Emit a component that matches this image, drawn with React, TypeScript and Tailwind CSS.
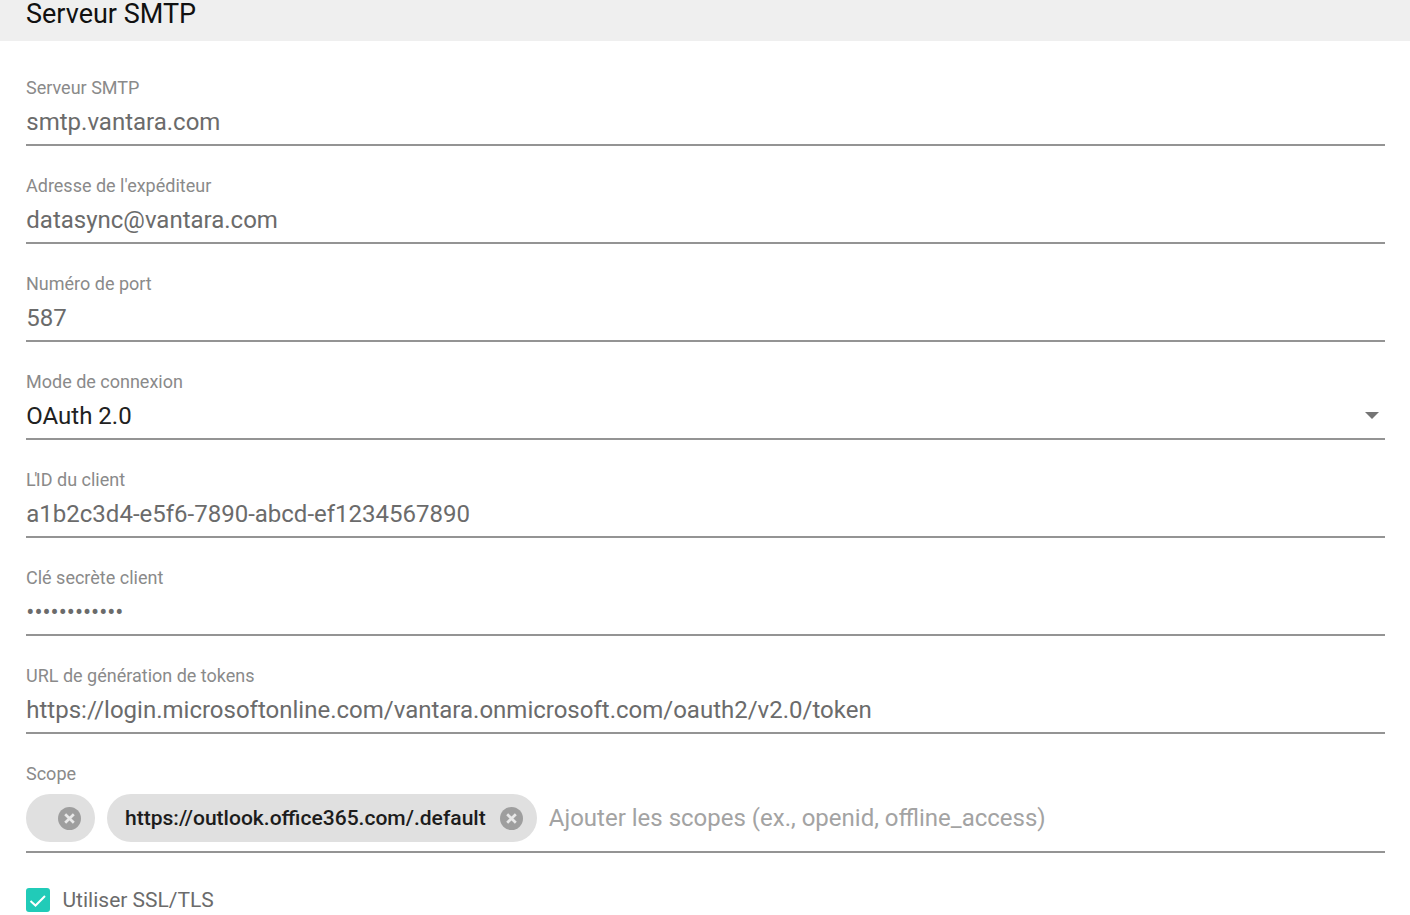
import React from "react";

function Field({ label, value, dark, children }: { label: React.ReactNode; value: string; dark?: boolean; children?: React.ReactNode }) {
  return (
    <div className="h-[98px] pt-[28px]">
      <div className="h-[24px] text-[18px] leading-[24px] text-[#8a8a8a]">{label}</div>
      <div className="flex h-[46px] items-center justify-between border-b-2 border-[#949494]">
        <span className={`pl-[0.3px] text-[24px] leading-[38px] ${dark ? "text-[#212121]" : "text-[#6b6b6b]"}`}>{value}</span>
        {children}
      </div>
    </div>
  );
}

function ChipX() {
  return (
    <svg width="23" height="23" viewBox="0 0 24 24" className="shrink-0">
      <circle cx="12" cy="12" r="12" fill="#9e9e9e" />
      <path d="M7.5 7.5l9 9M16.5 7.5l-9 9" stroke="#e8e8e8" strokeWidth="2.8" />
    </svg>
  );
}

export default function App() {
  return (
    <div className="h-[915px] overflow-hidden bg-white font-['Roboto',sans-serif]">
      <div className="flex h-[41px] items-end bg-[#efefef] px-[26px] pb-[13px]">
        <h1 className="text-[27px] leading-[28px] font-normal text-[#111111]">Serveur SMTP</h1>
      </div>
      <div className="mt-[7px] pl-[26px] pr-[25px]">
        <Field label="Serveur SMTP" value="smtp.vantara.com" />
        <Field label="Adresse de l'expéditeur" value="datasync@vantara.com" />
        <Field label="Numéro de port" value="587" />
        <Field label="Mode de connexion" value="OAuth 2.0" dark>
          <span className="mr-[6px] mb-[2px] h-0 w-0 border-x-[7px] border-t-[7px] border-x-transparent border-t-[#757575]" />
        </Field>
        <Field
          label={
            <>
              <span className="tracking-[-1.5px]">L'</span>ID du client
            </>
          }
          value="a1b2c3d4-e5f6-7890-abcd-ef1234567890"
        />
        <Field label="Clé secrète client" value="••••••••••••" />
        <Field label="URL de génération de tokens" value="https://login.microsoftonline.com/vantara.onmicrosoft.com/oauth2/v2.0/token" />
        <div className="pt-[28px]">
          <div className="h-[24px] text-[18px] leading-[24px] text-[#8a8a8a]">Scope</div>
          <div className="flex h-[67px] items-start gap-[12px] border-b-2 border-[#949494] pt-[8px]">
            <div className="flex h-[48px] w-[69px] items-center justify-end rounded-full bg-[#e0e0e0] pr-[14px]">
              <ChipX />
            </div>
            <div className="flex h-[48px] items-center gap-[14px] rounded-full bg-[#e0e0e0] pl-[18px] pr-[14px]">
              <span className="text-[21.06px] font-medium text-[#1c1c1c]">https://outlook.office365.com/.default</span>
              <ChipX />
            </div>
            <span className="flex h-[48px] items-center text-[24px] text-[#a3a3a3]">Ajouter les scopes (ex., openid, offline_access)</span>
          </div>
        </div>
        <div className="mt-[31px] flex items-center gap-[12.5px]">
          <div className="h-[24px] w-[24px] rounded-[3px] bg-[#21cbb8]">
            <svg width="24" height="24" viewBox="0 0 24 24" fill="none">
              <path d="M4.5 13l5 4.5 9.5-9.5" stroke="#fff" strokeWidth="2" />
            </svg>
          </div>
          <span className="mt-[1px] text-[21px] text-[#6b6b6b]">Utiliser SSL/TLS</span>
        </div>
      </div>
    </div>
  );
}
